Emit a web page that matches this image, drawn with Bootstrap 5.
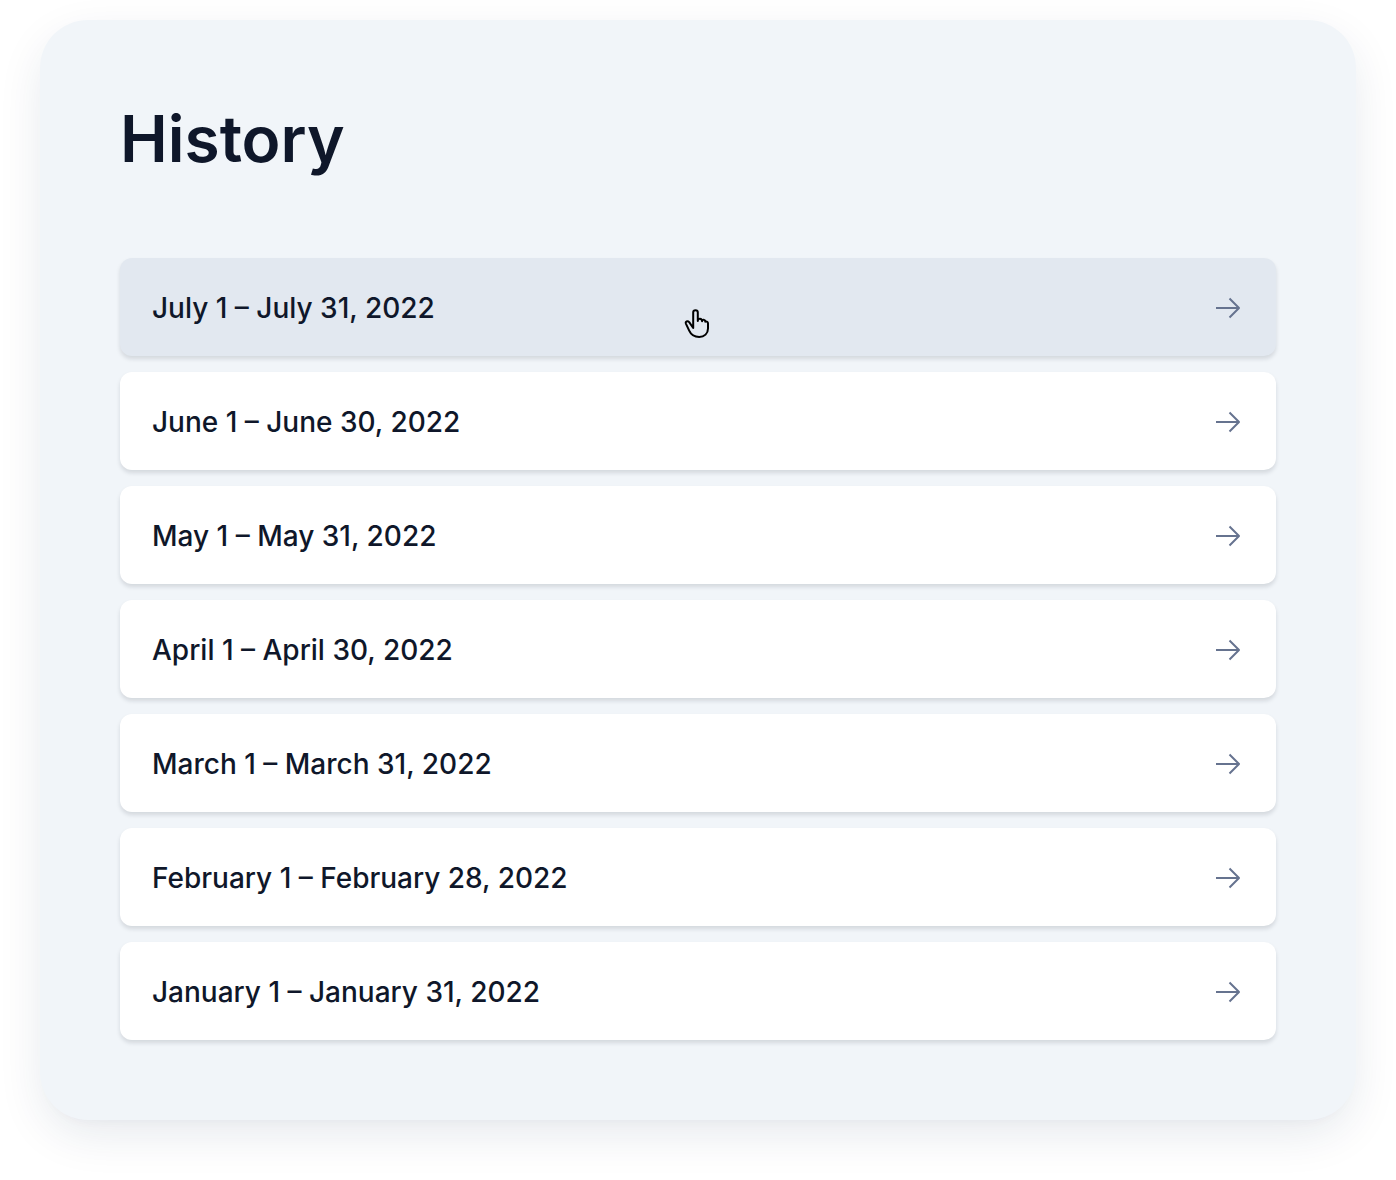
<!DOCTYPE html>
<html lang="en">
<head>
<meta charset="utf-8">
<meta name="viewport" content="width=device-width, initial-scale=1">
<title>History</title>
<link href="https://cdn.jsdelivr.net/npm/bootstrap@5.3.0/dist/css/bootstrap.min.css" rel="stylesheet">
<style>
body { font-family: Inter, "Liberation Sans", sans-serif; color: #0f172a; background: #fff; }
.page-wrap { padding: 20px 40px 60px; }
.history-panel { background: #f1f5f9; border-radius: 48px; padding: 80px; box-shadow: 0 16px 48px -4px rgba(15, 50, 80, .11), 0 8px 12px -8px rgba(15, 50, 80, .04); }
.history-title { font-size: 64px; font-weight: 600; line-height: 78px; margin-bottom: 80px; }
.history-list { gap: 16px; }
.period { padding: 26px 32px 24px; border-radius: 12px; background: #fff; color: #0f172a; font-size: 28px; font-weight: 500; line-height: 48px; box-shadow: 0 3px 4px rgba(15, 23, 42, .13); }
.period:hover, .period.is-hovered { background: #e2e8f0; color: #0f172a; }
.pointer { width: 60px; height: 60px; left: 50%; top: 50%; margin: -12px 0 0 -28px; pointer-events: none; }
</style>
<script src="https://cdn.jsdelivr.net/npm/bootstrap@5.3.0/dist/js/bootstrap.bundle.min.js" defer></script>
</head>
<body>
<svg class="d-none" aria-hidden="true">
  <symbol id="arrow" viewBox="0 0 32 32"><path d="M4 16h23M17.500 6.500l9.500 9.500-9.500 9.500" fill="none" stroke="#66738f" stroke-width="2" stroke-linejoin="round"/></symbol>
</svg>
<main class="page-wrap">
  <section class="history-panel">
    <h1 class="history-title">History</h1>
    <ul class="history-list list-unstyled d-flex flex-column mb-0">
      <li class="position-relative">
        <a href="#" class="period is-hovered d-flex align-items-center justify-content-between text-decoration-none"><span>July 1 – July 31, 2022</span><svg width="32" height="32" aria-hidden="true"><use href="#arrow"/></svg></a>
        <svg class="pointer position-absolute" viewBox="0 0 60 60" aria-hidden="true"><path d="M23.200 33V17.500a2.300 2.300 0 0 1 4.600 0V26c0-3 4.200-2.900 4.300.2 0-2.200 3.200-1.800 3.200.5 1.400-.8 2.700.2 2.700 1.900V33.500c0 5-3.600 8.500-8.800 8.500-4.700 0-8.200-2.200-10-6.300l-3.200-6.900c-1-2.300 1.500-3.400 3.200-1.700Z" fill="none" stroke="#000" stroke-width="2" stroke-linejoin="round"/></svg>
      </li>
      <li><a href="#" class="period d-flex align-items-center justify-content-between text-decoration-none"><span>June 1 – June 30, 2022</span><svg width="32" height="32" aria-hidden="true"><use href="#arrow"/></svg></a></li>
      <li><a href="#" class="period d-flex align-items-center justify-content-between text-decoration-none"><span>May 1 – May 31, 2022</span><svg width="32" height="32" aria-hidden="true"><use href="#arrow"/></svg></a></li>
      <li><a href="#" class="period d-flex align-items-center justify-content-between text-decoration-none"><span>April 1 – April 30, 2022</span><svg width="32" height="32" aria-hidden="true"><use href="#arrow"/></svg></a></li>
      <li><a href="#" class="period d-flex align-items-center justify-content-between text-decoration-none"><span>March 1 – March 31, 2022</span><svg width="32" height="32" aria-hidden="true"><use href="#arrow"/></svg></a></li>
      <li><a href="#" class="period d-flex align-items-center justify-content-between text-decoration-none"><span>February 1 – February 28, 2022</span><svg width="32" height="32" aria-hidden="true"><use href="#arrow"/></svg></a></li>
      <li><a href="#" class="period d-flex align-items-center justify-content-between text-decoration-none"><span>January 1 – January 31, 2022</span><svg width="32" height="32" aria-hidden="true"><use href="#arrow"/></svg></a></li>
    </ul>
  </section>
</main>
</body>
</html>
